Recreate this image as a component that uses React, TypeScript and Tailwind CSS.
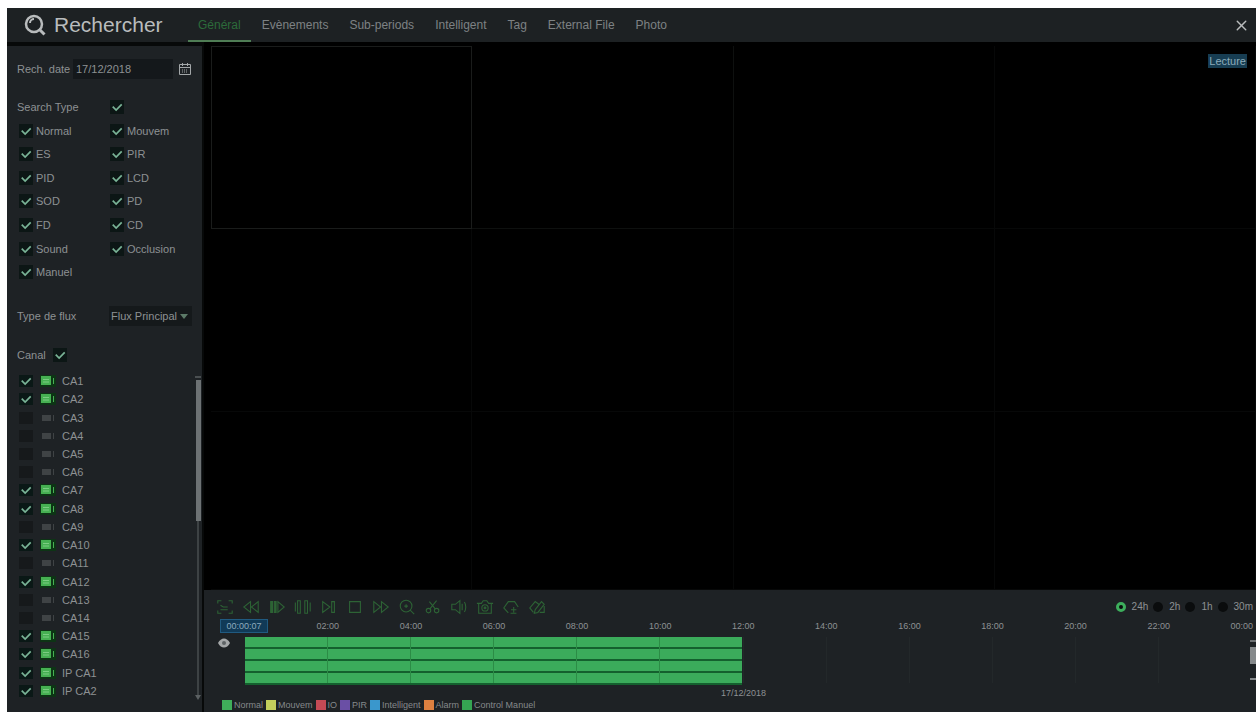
import * as React from 'react';
import { X } from 'lucide-react';

const TABS = ['Général', 'Evènements', 'Sub-periods', 'Intelligent', 'Tag', 'External File', 'Photo'];

const SEARCH_TYPES = [
  'Normal', 'Mouvem',
  'ES', 'PIR',
  'PID', 'LCD',
  'SOD', 'PD',
  'FD', 'CD',
  'Sound', 'Occlusion',
  'Manuel',
];

const CHANNELS = [
  { name: 'CA1', online: true },
  { name: 'CA2', online: true },
  { name: 'CA3', online: false },
  { name: 'CA4', online: false },
  { name: 'CA5', online: false },
  { name: 'CA6', online: false },
  { name: 'CA7', online: true },
  { name: 'CA8', online: true },
  { name: 'CA9', online: false },
  { name: 'CA10', online: true },
  { name: 'CA11', online: false },
  { name: 'CA12', online: true },
  { name: 'CA13', online: false },
  { name: 'CA14', online: false },
  { name: 'CA15', online: true },
  { name: 'CA16', online: true },
  { name: 'IP CA1', online: true },
  { name: 'IP CA2', online: true },
];

const HOURS = ['02:00', '04:00', '06:00', '08:00', '10:00', '12:00', '14:00', '16:00', '18:00', '20:00', '22:00', '00:00'];

const ZOOM_LEVELS = ['24h', '2h', '1h', '30m'];

const LEGEND = [
  { label: 'Normal', color: 'bg-[#3fae5a]' },
  { label: 'Mouvem', color: 'bg-[#c3cf5c]' },
  { label: 'IO', color: 'bg-[#c44a55]' },
  { label: 'PIR', color: 'bg-[#6a4fa5]' },
  { label: 'Intelligent', color: 'bg-[#3a97cc]' },
  { label: 'Alarm', color: 'bg-[#dd8040]' },
  { label: 'Control Manuel', color: 'bg-[#35a452]' },
];

// Player buttons, drawn on a 20x20 grid
const CONTROLS: { name: string; icon: React.ReactNode }[] = [
  { name: 'Fullscreen', icon: <path d="M2 6V3h4M14 3h4v3M2 14v3h4M18 14v3h-4M5 8l3 2h5M5 13h8" /> },
  { name: 'Rewind', icon: <path d="M9.500 4v12L2 10zM18 4v12l-7.500-6z" /> },
  { name: 'Slow', icon: <><path d="M3 4h2v12H3zM7 4h2v12H7z" fill="currentColor" /><path d="M11 4l7 6-7 6z" /></> },
  { name: 'Pause', icon: <path d="M4 3h3v14H4zM12 3h3v14h-3zM1.500 5v10M18 5v10" /> },
  { name: 'Next frame', icon: <path d="M3 4l8 6-8 6zM13 4h3v12h-3z" /> },
  { name: 'Stop', icon: <path d="M4 4h12v12H4z" /> },
  { name: 'Forward', icon: <path d="M2 4l7.500 6L2 16zM10.500 4l7.500 6-7.500 6z" /> },
  { name: 'Zoom', icon: <><circle cx="9" cy="9" r="6.500" /><path d="M13.500 13.500L18 18M9 7v4M7 9h4" /></> },
  { name: 'Cut', icon: <><circle cx="5" cy="14" r="2.500" /><circle cx="14" cy="14" r="2.500" /><path d="M6.500 12L14 3M12.500 12L6 4" /></> },
  { name: 'Volume', icon: <path d="M2 7v6h4l5 4V3L6 7zM13.500 6.500v7M16 4.500c2 3 2 8 0 11" /> },
  { name: 'Snapshot', icon: <><path d="M1 6h5l2-3h4l2 3h5M3 6v11h14V6" /><circle cx="10" cy="11" r="3.500" /><circle cx="10" cy="11" r="1" /></> },
  { name: 'Tag', icon: <path d="M7 16.500L2 11l5-7h7l4 6M10 13h6M13 10v6M9.500 17H16" /> },
  { name: 'Custom tag', icon: <path d="M6 16l-4-5 6-7 4 3M8 13l7-9 3 3-7 9-4 1zM13 16h5V9" /> },
];

function Checkbox({ id, checked, small }: { id: string; checked: boolean; small?: boolean }) {
  return (
    <span className="grid shrink-0 place-items-center">
      <input
        id={id}
        type="checkbox"
        defaultChecked={checked}
        className={
          small
            ? 'peer col-start-1 row-start-1 h-3 w-[14px] appearance-none bg-[#16191b] checked:bg-[#0a1816]'
            : 'peer col-start-1 row-start-1 h-[14px] w-[14px] appearance-none bg-[#0c1615]'
        }
      />
      <svg
        viewBox="0 0 14 14"
        className="pointer-events-none invisible col-start-1 row-start-1 h-3 w-3 text-[#79b396] peer-checked:visible"
        fill="none"
        stroke="currentColor"
        strokeWidth="2"
      >
        <path d="M2 6.500l4 4 6.500-6.500" />
      </svg>
    </span>
  );
}

function CameraIcon({ online }: { online: boolean }) {
  return (
    <svg viewBox="0 0 16 12" className={online ? 'h-3 w-4 text-[#46b052]' : 'h-3 w-4 text-[#3f4345]'} fill="currentColor">
      {online && <rect width="16" height="12" fill="#0d3415" />}
      {online ? <rect x="1" y="1" width="10" height="9" /> : <rect x="2" y="3" width="9" height="6" />}
      {online && <path d="M3 4.500h6M3 7h6" stroke="#7bcd82" />}
      <rect x="13" y="3" width="1" height="6" />
    </svg>
  );
}

function Header() {
  const [active, setActive] = React.useState('Général');

  return (
    <header className="flex h-[34px] items-stretch bg-[#1d2123]">
      <div className="flex w-[181px] shrink-0 items-center gap-2 pl-[17px]">
        <svg viewBox="0 0 22 22" className="h-[22px] w-[22px] text-[#b9bcbd]" fill="none" stroke="currentColor" strokeWidth="2.500">
          <circle cx="10" cy="10" r="8" />
          <path d="M15 15l5.500 5.500" strokeWidth="3" />
          <path d="M6 9a4 4 0 0 1 4-4" strokeWidth="2" />
        </svg>
        <h1 className="text-[21px] leading-6 text-[#b9bcbd]">Rechercher</h1>
      </div>
      <nav className="flex items-stretch gap-px">
        {TABS.map((tab) => (
          <button
            key={tab}
            onClick={() => setActive(tab)}
            className={
              tab === active
                ? 'border-b-2 border-[#4f7d55] px-[10px] pt-[2px] text-[12px] text-[#2c6b3a]'
                : 'border-b-2 border-transparent px-[10px] pt-[2px] text-[12px] text-[#7d8184]'
            }
          >
            {tab}
          </button>
        ))}
      </nav>
      <button aria-label="Fermer" className="ml-auto px-[6px] text-[#b9bcbd]">
        <X className="h-[17px] w-[17px]" />
      </button>
    </header>
  );
}

function Sidebar() {
  return (
    <aside className="flex w-[195px] shrink-0 flex-col bg-[#1e2225] pt-3 pb-3 text-[11px] leading-4 text-[#8d9193]">
      <div className="flex h-[22px] items-center pr-[10px] pl-[10px]">
        <label htmlFor="date" className="w-[56px] shrink-0">Rech. date</label>
        <input id="date" type="text" defaultValue="17/12/2018" className="h-5 w-[100px] bg-[#14181b] pl-[3px] text-[#8d9193]" />
        <button aria-label="Calendrier" className="ml-auto text-[#a3a7a9]">
          <svg viewBox="0 0 14 14" className="h-[14px] w-[14px]" fill="none" stroke="currentColor">
            <path d="M1.500 2.500h11v10h-11zM1.500 5.500h11M4.500 1v3M9.500 1v3" />
            <path d="M4 8h6M4 10h6" strokeDasharray="1 1" />
          </svg>
        </button>
      </div>

      <div className="mt-[15px] flex h-6 items-center pl-[10px]">
        <label htmlFor="all-types" className="w-[93px]">Search Type</label>
        <Checkbox id="all-types" checked />
      </div>
      <div className="grid h-[165px] auto-rows-fr grid-cols-[91px_1fr] pl-3">
        {SEARCH_TYPES.map((type) => (
          <div key={type} className="flex items-center gap-[3px]">
            <Checkbox id={`type-${type}`} checked />
            <label htmlFor={`type-${type}`}>{type}</label>
          </div>
        ))}
      </div>

      <div className="mt-[21px] flex h-[22px] items-center pl-[10px]">
        <label htmlFor="stream" className="w-[92px] shrink-0">Type de flux</label>
        <span className="grid items-center">
          <select id="stream" className="col-start-1 row-start-1 h-5 w-[83px] appearance-none bg-[#15191b] pl-[2px] text-[#8d9193]">
            <option>Flux Principal</option>
          </select>
          <svg viewBox="0 0 8 5" className="pointer-events-none col-start-1 row-start-1 mr-1 h-[5px] w-2 justify-self-end" fill="#5c7a68">
            <path d="M0 0h8L4 5z" />
          </svg>
        </span>
      </div>

      <div className="mt-[18px] flex h-5 items-center gap-[7px] pl-[10px]">
        <label htmlFor="all-channels">Canal</label>
        <Checkbox id="all-channels" checked />
      </div>
      <div className="mt-[7px] flex flex-1">
        <ul className="grid flex-1 auto-rows-fr pl-3">
          {CHANNELS.map((channel) => (
            <li key={channel.name} className="flex items-center gap-[7px]">
              <Checkbox id={channel.name} checked={channel.online} small />
              <label htmlFor={channel.name} className="flex items-center gap-[6px]">
                <CameraIcon online={channel.online} />
                {channel.name}
              </label>
            </li>
          ))}
        </ul>
        {/* Scrollbar */}
        <div className="flex w-2 flex-col items-center pt-1">
          <span className="h-[2px] w-[6px] bg-[#4a4f51]" />
          <span className="mt-[2px] h-[141px] w-[5px] bg-[#6d7274]" />
          <span className="w-[2px] flex-1 bg-[#3d4244]" />
          <svg viewBox="0 0 6 5" className="h-[5px] w-[6px]" fill="#5b6062">
            <path d="M0 0h6L3 5z" />
          </svg>
        </div>
      </div>
    </aside>
  );
}

function VideoWall() {
  return (
    <section className="relative grid flex-1 grid-cols-4 grid-rows-[34fr_34fr_33fr] bg-black pt-1 pl-[7px]">
      {Array.from({ length: 12 }, (_, i) => (
        <div
          key={i}
          className={i === 0 ? 'border border-[#1a1c1b]' : i < 2 ? 'border-r border-b border-[#0e100f]' : 'border-r border-b border-[#070808]'}
        />
      ))}
      <span className="absolute top-3 right-[9px] bg-[#173d52] px-px text-[11px] leading-[14px] text-[#8cabba]">
        Lecture
      </span>
    </section>
  );
}

function Timeline() {
  return (
    <div className="flex">
      <div className="w-[41px] shrink-0">
        <div className="ml-4 h-[14px] w-[48px] border border-[#205a80] bg-[#113a57] text-center text-[9px] leading-3 text-[#8daabd]">
          00:00:07
        </div>
        <svg viewBox="0 0 12 12" className="mt-[4px] ml-[14px] h-3 w-3" fill="#a4a7a8">
          <path d="M0 6c3-6 9-6 12 0-3 6-9 6-12 0z" />
          <circle cx="6" cy="6" r="2" fill="#5e6365" />
        </svg>
      </div>
      <div className="flex-1">
        <ul className="grid h-[14px] grid-cols-12 text-[9px] leading-[14px] text-[#8d9193]">
          {HOURS.map((hour) => (
            <li key={hour} className="-mr-[11px] text-right">{hour}</li>
          ))}
        </ul>
        <div className="relative mt-[4px] flex h-[46px] flex-col gap-[2px]">
          {[0, 1, 2, 3].map((track) => (
            <div key={track} className="flex-1">
              <div className="h-full w-[calc(50%-2px)] bg-[#3bab5b] shadow-[0_2px_0_#14602e]" />
            </div>
          ))}
          <div className="absolute inset-0 grid grid-cols-12">
            {HOURS.map((hour, i) => (
              <span key={hour} className={i < 5 ? 'border-r border-[#2c8c46]' : i < 11 ? 'border-r border-[#23282a]' : ''} />
            ))}
          </div>
        </div>
        <p className="mt-1 text-center text-[9px] leading-3 text-[#8d9193]">17/12/2018</p>
      </div>
      <div className="mt-[21px] flex h-10 w-[14px] flex-col items-end">
        <span className="h-[2px] w-[6px] bg-[#6d7173]" />
        <span className="mt-[5px] h-[17px] w-[6px] bg-[#85898b]" />
        <span className="mt-auto h-[2px] w-[6px] bg-[#85898b]" />
      </div>
    </div>
  );
}

function Player() {
  const [zoom, setZoom] = React.useState('24h');

  return (
    <section className="bg-[#1e2225] pb-px">
      <div className="flex h-[29px] items-center justify-between pt-[4px] pr-[3px] pl-2">
        <div className="flex">
          {CONTROLS.map((control) => (
            <button key={control.name} aria-label={control.name} className="flex w-[26px] justify-center text-[#2d6335]">
              <svg viewBox="0 0 20 20" className="h-[18px] w-[18px]" fill="none" stroke="currentColor" strokeWidth="1.200">
                {control.icon}
              </svg>
            </button>
          ))}
        </div>
        <div className="flex gap-[5px] text-[10px] leading-3 text-[#8d9193]">
          {ZOOM_LEVELS.map((level) => (
            <label key={level} className="flex items-center gap-[6px]">
              <input
                type="radio"
                name="zoom"
                checked={zoom === level}
                onChange={() => setZoom(level)}
                className="h-[10px] w-[10px] appearance-none rounded-full bg-[#0a0c0d] checked:border-[3px] checked:border-[#3dae5c]"
              />
              {level}
            </label>
          ))}
        </div>
      </div>
      <Timeline />
      <ul className="flex h-3 items-center gap-[3px] pl-[18px] text-[9px] leading-3 text-[#85898b]">
        {LEGEND.map((item) => (
          <li key={item.label} className="flex items-center gap-[2px]">
            <span className={`h-[10px] w-[10px] ${item.color}`} />
            {item.label}
          </li>
        ))}
      </ul>
    </section>
  );
}

export default function App() {
  return (
    <div className="flex min-h-screen bg-white pt-2 pb-[2px] pl-[7px] font-['Liberation_Sans',Arial,sans-serif]">
      <div className="flex flex-1 flex-col bg-[#070909]">
        <Header />
        <main className="flex flex-1 pt-1">
          <Sidebar />
          <div className="-mt-1 flex min-w-0 flex-1 flex-col pl-[2px]">
            <VideoWall />
            <Player />
          </div>
        </main>
      </div>
    </div>
  );
}
